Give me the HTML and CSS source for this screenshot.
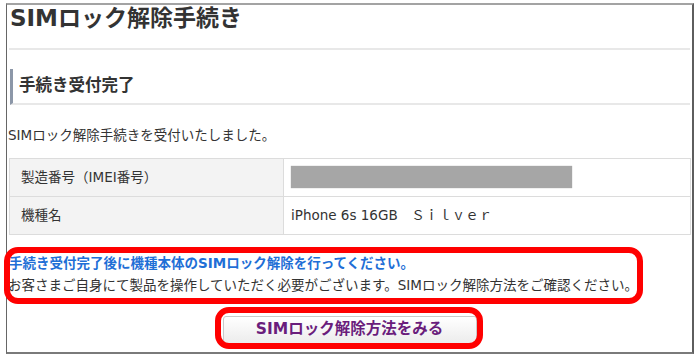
FILE: index.html
```html
<!DOCTYPE html>
<html lang="ja">
<head>
<meta charset="utf-8">
<title>SIMロック解除手続き</title>
<link rel="stylesheet" href="styles.css">
</head>
<body>
<div class="frame">
  <h1 class="title">SIMロック解除手続き</h1>
  <h2 class="sub">手続き受付完了</h2>
  <p class="msg">SIMロック解除手続きを受付いたしました。</p>
  <table class="info">
    <tr>
      <th>製造番号（IMEI番号）</th>
      <td><span class="redact"></span></td>
    </tr>
    <tr>
      <th>機種名</th>
      <td>iPhone 6s 16GB　Ｓｉｌｖｅｒ</td>
    </tr>
  </table>
  <div class="notice">
    <p class="notice-blue">手続き受付完了後に機種本体のSIMロック解除を行ってください。</p>
    <p class="notice-text">お客さまご自身にて製品を操作していただく必要がございます。SIMロック解除方法をご確認ください。</p>
  </div>
  <div class="btn-row">
    <a class="btn">SIMロック解除方法をみる</a>
  </div>
  <div class="mark mark-notice"></div>
  <div class="mark mark-btn"></div>
</div>
</body>
</html>
```

FILE: styles.css
```css
* { box-sizing: border-box; }
html, body { margin: 0; padding: 0; background: #fff; }
body {
  font-family: "DejaVu Sans", "Noto Sans CJK JP", sans-serif;
  color: #333;
  width: 700px;
  height: 357px;
  overflow: hidden;
}
.frame {
  position: relative;
  margin: 3px 0 0 6px;
  width: 688px;
  height: 351px;
  border-top: 2px solid #a3a3a3;
  border-left: 1px solid #666;
  border-right: 2px solid #5e5e5e;
  border-bottom: 2px solid #7a7a7a;
}
.title {
  margin: 0 2px;
  height: 45px;
  padding-left: 1px;
  font-size: 23px;
  line-height: 26px;
  font-weight: bold;
  color: #333;
  border-bottom: 2px solid #e8e8e8;
}
.sub {
  margin: 19px 2px 0 3px;
  height: 36px;
  padding-left: 6px;
  font-size: 16.5px;
  line-height: 34px;
  font-weight: bold;
  color: #333;
  border-left: 3px solid #8c97a8;
  border-bottom: 2px solid #e8e8e8;
}
.msg {
  margin: 20px 0 0 1px;
  font-size: 13.5px;
  line-height: 20px;
}
.info {
  margin: 13px 2px 0 2px;
  width: 682px;
  border-collapse: collapse;
  font-size: 13.5px;
}
.info th, .info td {
  border: 1px solid #dcdcdc;
  height: 38px;
  padding: 0 0 4px 11px;
  text-align: left;
  font-weight: normal;
  vertical-align: middle;
  color: #333;
}
.info th {
  width: 274px;
  background: #f3f3f3;
}
.info td {
  padding-left: 7px;
}
.redact {
  display: inline-block;
  vertical-align: middle;
  width: 281px;
  height: 22px;
  margin-top: 2px;
  background: #a6a6a6;
  box-shadow: 0 0 1px #a6a6a6;
}
.notice {
  margin: 17px 0 0 1px;
  font-size: 13.5px;
  line-height: 22px;
}
.notice p { margin: 0; white-space: nowrap; }
.notice-blue {
  padding-left: 1px;
  color: #1f6fd6;
  font-weight: bold;
}
.btn-row {
  margin-top: 20px;
  display: flex;
  justify-content: center;
}
.btn {
  display: block;
  width: 254px;
  height: 28px;
  line-height: 24px;
  text-align: center;
  font-size: 15.5px;
  font-weight: bold;
  color: #6a1d7c;
  border: 1px solid #c9c9c9;
  border-radius: 3px;
  background: linear-gradient(#ffffff, #ececec);
}
.mark {
  position: absolute;
  border: 6px solid #ff0000;
  border-radius: 14px;
}
.mark-notice {
  left: -3px;
  top: 242px;
  width: 639px;
  height: 57px;
}
.mark-btn {
  left: 208px;
  top: 302px;
  width: 268px;
  height: 42px;
}
```
